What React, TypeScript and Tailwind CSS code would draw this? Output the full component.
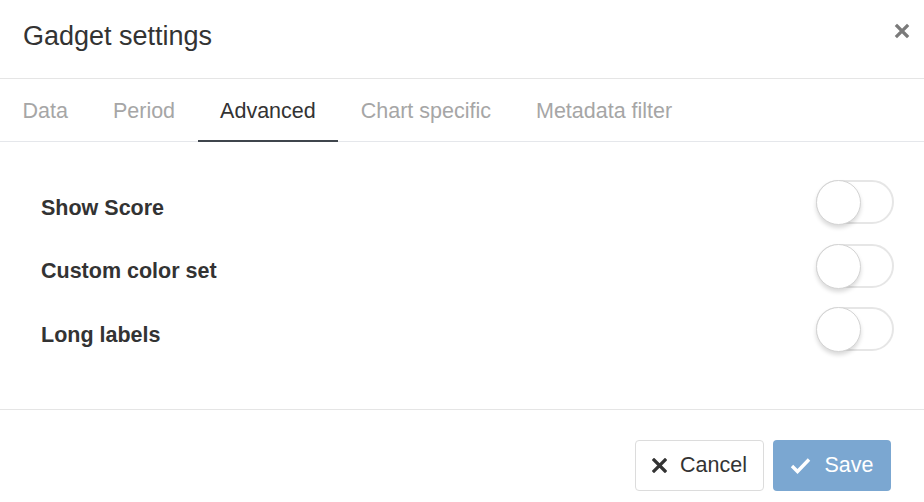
import { useState } from "react";

const tabs = ["Data", "Period", "Advanced", "Chart specific", "Metadata filter"];

const options = ["Show Score", "Custom color set", "Long labels"];

function Toggle({ on, onClick }: { on: boolean; onClick: () => void }) {
  return (
    <button
      onClick={onClick}
      className={`relative w-[78px] h-[44px] rounded-full border-2 ${
        on ? "bg-[#7ba7d1] border-[#7ba7d1]" : "bg-white border-[#e6e6e6]"
      }`}
    >
      <span
        className={`absolute top-[-2px] w-[45px] h-[45px] rounded-full bg-white border border-[#d4d4d4] shadow-[0_3px_4px_rgba(0,0,0,0.15)] ${
          on ? "left-[31px]" : "left-[-2px]"
        }`}
      />
    </button>
  );
}

export default function App() {
  const [active, setActive] = useState("Advanced");
  const [values, setValues] = useState<boolean[]>([false, false, false]);

  return (
    <div className="w-[924px] h-[502px] bg-white font-['Liberation_Sans',Arial,sans-serif] text-[#333] overflow-hidden">

      {/* HEADER */}
      <div className="h-[79px] flex items-start justify-between pl-[23px] pr-[14px] pt-[20px] border-b border-[#e5e5e5]">
        <h1 className="text-[27px] leading-[32px] text-[#333]">Gadget settings</h1>
        <button className="text-[#7a7a7a] mt-[3px]">
          <svg width="16" height="16" viewBox="0 0 16 16">
            <path d="M3 3 L13 13 M13 3 L3 13" stroke="currentColor" strokeWidth="3.2" strokeLinecap="square" />
          </svg>
        </button>
      </div>

      {/* TABS */}
      <div className="flex border-b border-[#e5e7eb] h-[63px]">
        {tabs.map((t) => (
          <button
            key={t}
            onClick={() => setActive(t)}
            className={`px-[22.5px] pt-[3px] text-[21.5px] h-[63px] border-b-2 -mb-[1px] ${
              active === t ? "text-[#333] border-[#3f454c]" : "text-[#a6a6a6] border-transparent"
            }`}
          >
            {t}
          </button>
        ))}
      </div>

      {/* OPTIONS */}
      <div className="h-[268px] pt-[38px] pl-[41px] pr-[30px] border-b border-[#e5e5e5] flex flex-col gap-[19.5px]">
        {options.map((o, i) => (
          <div key={o} className="flex items-center justify-between h-[44px]">
            <span className="text-[21.5px] font-bold text-[#333] mt-[12px]">{o}</span>
            <Toggle
              on={values[i]}
              onClick={() => setValues(values.map((v, j) => (j === i ? !v : v)))}
            />
          </div>
        ))}
      </div>

      {/* FOOTER */}
      <div className="flex justify-end gap-[9px] pr-[33px] pt-[30px]">
        <button className="w-[129px] h-[51px] rounded-[4px] border border-[#dcdcdc] flex items-center justify-center gap-[13px] text-[21.5px] text-[#333] bg-white">
          <svg width="15" height="15" viewBox="0 0 15 15">
            <path d="M2 2 L13 13 M13 2 L2 13" stroke="#333" strokeWidth="3.2" strokeLinecap="square" />
          </svg>
          Cancel
        </button>
        <button className="w-[118px] h-[51px] rounded-[4px] bg-[#7ba7d1] flex items-center justify-center gap-[13px] text-[21.5px] text-white">
          <svg width="21" height="17" viewBox="0 0 21 17">
            <path d="M2 9 L7.5 14.5 L19 2.5" fill="none" stroke="white" strokeWidth="3.4" />
          </svg>
          Save
        </button>
      </div>

    </div>
  );
}
